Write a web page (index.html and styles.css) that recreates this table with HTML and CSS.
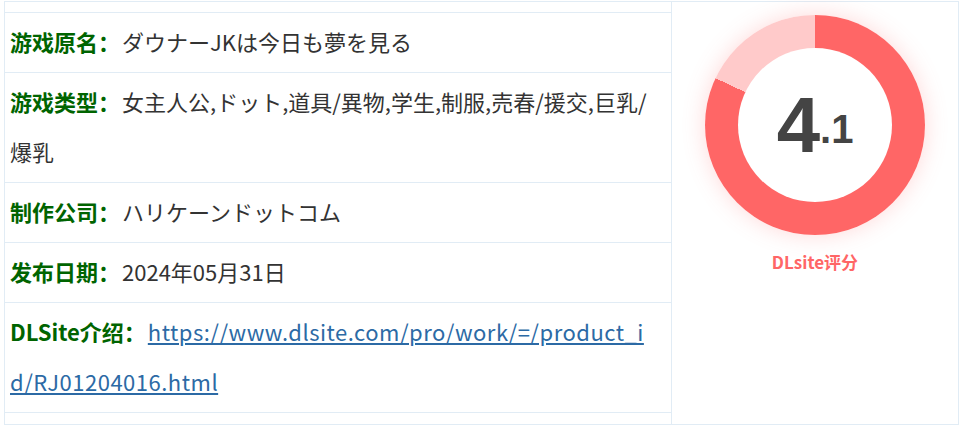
FILE: index.html
```html
<!DOCTYPE html>
<html lang="zh-CN">
<head>
  <meta charset="UTF-8" />
  <meta name="viewport" content="width=device-width, initial-scale=1.0"/>
  <title>游戏信息</title>
  <link rel="stylesheet" href="styles.css">
</head>
<body>
  <div class="game-info">
    <ul class="info-list">
      <li><b class="label">游戏原名：</b>ダウナーJKは今日も夢を見る</li>
      <li><b class="label">游戏类型：</b>女主人公,ドット,道具/異物,学生,制服,売春/援交,巨乳/爆乳</li>
      <li><b class="label">制作公司：</b>ハリケーンドットコム</li>
      <li><b class="label">发布日期：</b>2024年05月31日</li>
      <li><b class="label">DLSite介绍：</b><a href="#">https://www.dlsite.com/pro/work/=/product_id/RJ01204016.html</a></li>
    </ul>

    <div class="score-box">
      <!-- 4.1 / 5 = 82% -->
      <div class="ring">
        <div class="ring-inner">
          <span class="score-big">4</span><span class="score-small">.1</span>
        </div>
      </div>
      <p class="score-label">DLsite评分</p>
    </div>
  </div>
</body>
</html>
```

FILE: styles.css
```css
body {
  margin: 0;
  background: #fff;
  font-family: "Noto Sans CJK SC", "Noto Sans CJK JP", sans-serif;
  color: #333;
}
.game-info {
  display: flex;
  margin: 1px 3px 0 4px;
  border: 1px solid #e1ecf5;
  height: 422px;
}
.info-list {
  width: 666px;
  list-style: none;
  margin: 0;
  padding: 10px 0;
}
.info-list li {
  border-top: 1px solid #e1ecf5;
  padding: 3px 20px 6px 5px;
  font-size: 22px;
  line-height: 50px;
  word-break: break-all;
}
.info-list li:last-child {
  border-bottom: 1px solid #e1ecf5;
}
.label {
  color: #006400;
  font-weight: bold;
  margin-right: 2px;
}
.info-list a {
  color: #2c6aa5;
  text-decoration: underline;
  letter-spacing: 0.5px;
}
.score-box {
  flex: 1;
  border-left: 1px solid #e1ecf5;
  display: flex;
  flex-direction: column;
  align-items: center;
}
.ring {
  width: 220px;
  height: 220px;
  margin-top: 13px;
  border-radius: 50%;
  background: conic-gradient(#ff6666 0 82%, #ffcaca 0);
  box-shadow: 0 0 22px rgba(255, 102, 102, 0.25);
  display: flex;
  align-items: center;
  justify-content: center;
}
.ring-inner {
  width: 154px;
  height: 154px;
  border-radius: 50%;
  background: #fff;
  display: flex;
  align-items: center;
  justify-content: center;
  font-family: "Liberation Sans", Arial, sans-serif;
  font-weight: bold;
  color: #444;
  line-height: 1;
}
.score-big {
  font-size: 78px;
}
.score-small {
  font-size: 40px;
  align-self: center;
  margin-top: 8px;
}
.score-label {
  margin: 15px 0 0;
  color: #ff6666;
  font-size: 17px;
  font-weight: bold;
  line-height: 24px;
}
```
